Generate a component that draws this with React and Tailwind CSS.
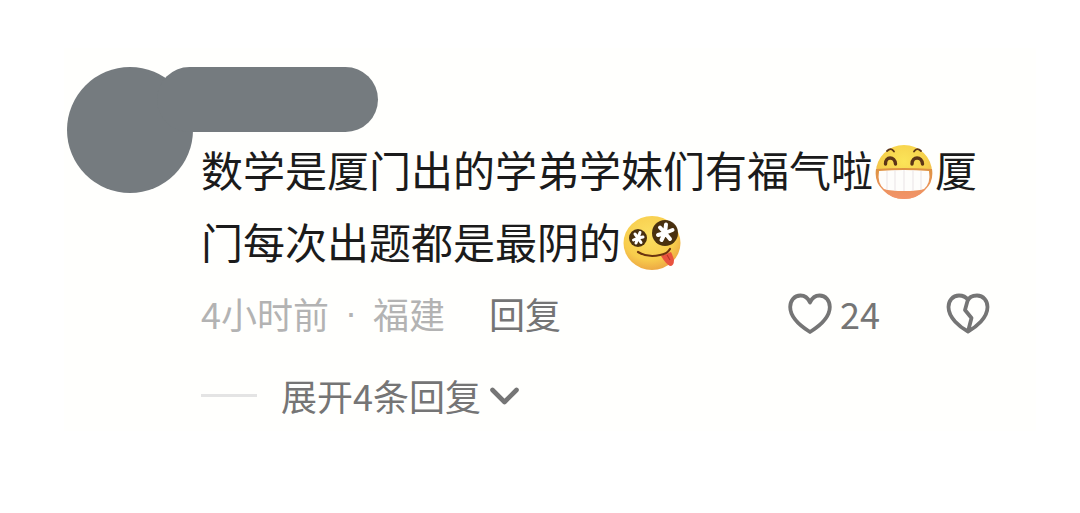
const GrinEmoji = () => (
  <svg viewBox="0 0 58 58" role="img" aria-label="呲牙" className="mx-0.5 inline-block size-[58px] align-[-14px]">
    <defs>
      <radialGradient id="grinFace" cx="50%" cy="30%" r="70%">
        <stop offset="0" stopColor="#fbe458" />
        <stop offset="0.6" stopColor="#f6cf4b" />
        <stop offset="1" stopColor="#efa552" />
      </radialGradient>
      <linearGradient id="grinLip" x1="0" y1="0" x2="0" y2="1">
        <stop offset="0" stopColor="#dd9340" />
        <stop offset="1" stopColor="#f3936b" />
      </linearGradient>
    </defs>
    <ellipse cx="29" cy="29" rx="28" ry="27" fill="url(#grinFace)" />
    <path d="M1 26Q29 24 57 26Q59 39 50 47Q42 56 29 56Q16 56 8 47Q-1 39 1 26Z" fill="url(#grinLip)" />
    <path d="M4 28Q29 26 54 28Q56 40 49 46Q42 48 29 48Q16 48 9 46Q2 40 4 28Z" fill="#fefdfb" />
    <path d="M12 28V47M20 27V48M29 27V48M38 27V48M46 28V47" stroke="#e9e3e5" strokeWidth="1" />
    <g fill="none" stroke="#5d3517" strokeLinecap="round">
      <path d="M10.5 21C10 13 20 13 20.500 21M37 21C37 13 47 13 47.500 21" strokeWidth="3.4" />
      <path d="M12 8Q16 4 19 8.500M39 8.500Q42 4 46 8" strokeWidth="1.8" />
    </g>
  </svg>
);

const MoneyEyesEmoji = () => (
  <svg viewBox="0 0 58 58" role="img" aria-label="见钱眼开" className="mx-0.5 inline-block size-[58px] align-[-13px]">
    <defs>
      <radialGradient id="moneyFace" cx="45%" cy="35%" r="65%">
        <stop offset="0" stopColor="#fbdf62" />
        <stop offset="0.7" stopColor="#f8cd4c" />
        <stop offset="1" stopColor="#eda944" />
      </radialGradient>
    </defs>
    <ellipse cx="29" cy="29" rx="28.500" ry="27" fill="url(#moneyFace)" />
    <circle cx="15" cy="24" r="9" fill="#49300f" />
    <circle cx="42" cy="19" r="13" fill="#49300f" />
    <g fill="none" stroke="#fff" strokeLinecap="round" strokeLinejoin="round">
      <path d="M15 24L12 20M15 24L17 18.500M15 24L10.500 26M15 24L20 23M15 24L13 29M15 24L18 28.500" strokeWidth="3" />
      <path d="M42 19L37 13.500M42 19L43 10.500M42 19L35 21M42 19L49.500 16M42 19L38.500 26M42 19L47 25" strokeWidth="4" />
    </g>
    <path d="M38 42Q42 40 48 38Q50 42 51 46Q51 52 47 52Q43 50 38 42Z" fill="#e9533f" />
    <path d="M44 41L47 46" stroke="#b93429" strokeWidth="1.2" />
    <path d="M15 38Q25 44 37 41Q44 40 47 35" fill="none" stroke="#6b3410" strokeWidth="2.2" strokeLinecap="round" />
  </svg>
);

const HeartIcon = () => (
  <svg viewBox="0 -2 44 44" className="size-11" fill="none" stroke="currentColor" strokeWidth="3.8" strokeLinejoin="round" aria-hidden="true">
    <path d="M22 9.5C20 5 17 2.5 12.5 2.5C6 2.5 2.2 8 2.2 14C2.2 25 14 34 22 39C30 34 41.8 25 41.8 14C41.8 8 38 2.5 31.5 2.5C27 2.5 24 5 22 9.5Z" />
  </svg>
);

const BrokenHeartIcon = () => (
  <svg viewBox="0 -2 44 44" className="size-11" fill="none" stroke="currentColor" strokeWidth="3.8" strokeLinejoin="round" aria-hidden="true">
    <path d="M22 7C20 4 17 2.5 13 2.5C6.5 2.5 2.5 8 2.5 14C2.5 25 14 34 22 38.5C30 34 41.5 25 41.5 14C41.5 8 37.5 2.5 31 2.5C27 2.5 23 4 21.5 8L19 17L25.5 25L22 38.5" />
  </svg>
);

export default function App() {
  return (
    <main className="min-h-screen bg-white py-12 pr-11 pl-16 font-['Noto_Sans_CJK_SC',sans-serif]">
      <article className="flex items-start bg-[#fffffd] pt-[19px] pr-[46px] pb-4 pl-[3px]">
        <div className="size-[126px] shrink-0 rounded-full bg-[#757b7f]" />
        <div className="ml-2 min-w-0 flex-1">
          <div className="-ml-11 h-[65px] w-[221px] rounded-full bg-[#757b7f]" />
          <p className="mt-px text-[42px] leading-[72px] text-[#1b1b1b]">
            数学是厦门出的学弟学妹们有福气啦
            <GrinEmoji />
            厦门每次出题都是最阴的
            <MoneyEyesEmoji />
          </p>
          <div className="mt-[14px] flex items-center text-4xl leading-10 text-[#757575]">
            <p className="flex items-center text-[#b3b3b3]">
              <span>4小时前</span>
              <span className="mx-4 font-['Liberation_Sans',sans-serif]">·</span>
              <span>福建</span>
            </p>
            <button type="button" className="ml-11">回复</button>
            <button type="button" aria-label="赞 24" className="ml-auto flex items-center gap-2">
              <HeartIcon />
              <span>24</span>
            </button>
            <button type="button" aria-label="不喜欢" className="ml-[66px]">
              <BrokenHeartIcon />
            </button>
          </div>
          <button type="button" className="mt-10 flex items-center text-4xl leading-10 text-[#757575]">
            <span className="mr-6 h-[3px] w-14 bg-[#e4e4e4]" />
            展开4条回复
            <svg viewBox="0 0 30 20" className="ml-2 h-5 w-[30px]" fill="none" stroke="currentColor" strokeWidth="4.6" strokeLinecap="round" strokeLinejoin="round" aria-hidden="true">
              <path d="M3.5 5L15.5 17L27.5 5" />
            </svg>
          </button>
        </div>
      </article>
    </main>
  );
}
